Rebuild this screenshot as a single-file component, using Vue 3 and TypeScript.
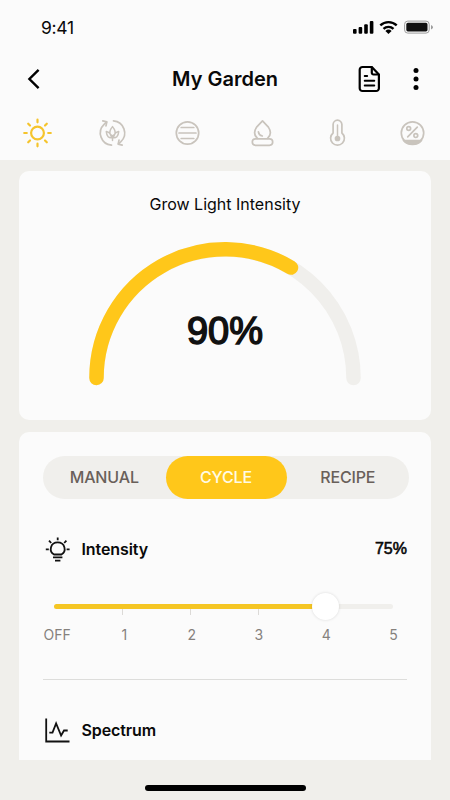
<script setup lang="ts">
import { ref, computed } from 'vue'

const modes = ['MANUAL', 'CYCLE', 'RECIPE']
const mode = ref('CYCLE')
const steps = ['OFF', '1', '2', '3', '4', '5']
const ticks = [67.5, 135.5, 203.5]
const level = ref(4)
const fill = computed(() => `${(level.value / 5) * 100}%`)
</script>

<template>
  <div class="screen">
    <header class="top">
      <div class="status">
        <span class="time">9:41</span>
        <svg class="status-icons" width="82" height="16" viewBox="0 0 82 16">
          <rect x="0" y="9" width="3.6" height="4.8" rx="1" />
          <rect x="5.6" y="7" width="3.6" height="6.8" rx="1" />
          <rect x="11.2" y="4.2" width="3.6" height="9.6" rx="1" />
          <rect x="16.8" y="1" width="3.6" height="12.8" rx="1" />
          <g fill="none" stroke="#000" stroke-width="2.4">
            <path d="M27.3 5.4a12 12 0 0 1 16.4 0" />
            <path d="M30.5 8.9a7.3 7.3 0 0 1 10 0" />
          </g>
          <path d="M32.4 10.9a4.6 4.6 0 0 1 6.2 0L35.5 14z" />
          <rect x="51.6" y="1.1" width="24.6" height="12" rx="3.2" fill="none" stroke="#9d9d9d" />
          <rect x="53.3" y="2.8" width="21.2" height="8.6" rx="1.6" fill="#111" />
          <path d="M78 5v4.4q2-.7 2-2.2T78 5z" fill="#9d9d9d" />
        </svg>
      </div>
      <div class="nav">
        <svg width="14" height="22" viewBox="0 0 14 22">
          <path d="M11.6 1.8 2.4 11l9.2 9.2" fill="none" stroke="#000" stroke-width="2.4" />
        </svg>
        <h1>My Garden</h1>
        <svg width="24" height="28" viewBox="0 0 24 28">
          <g fill="none" stroke="#000" stroke-width="2.2" stroke-linejoin="round" stroke-linecap="round">
            <path d="M4.5 2h9.3l7.1 7.4v13.8a2.8 2.8 0 0 1-2.8 2.8H4.5a2.8 2.8 0 0 1-2.8-2.8V4.8A2.8 2.8 0 0 1 4.5 2z" />
            <path d="M13.8 2.4v5.4a1.7 1.7 0 0 0 1.7 1.7h5" />
            <path d="M6.7 11h2.5M6.7 15.7h9.6M6.7 20.5h9.6" stroke-width="1.9" />
          </g>
        </svg>
        <svg class="more" width="6" height="24" viewBox="0 0 6 24">
          <circle cx="3" cy="3.4" r="2.5" /><circle cx="3" cy="12" r="2.5" /><circle cx="3" cy="20.6" r="2.5" />
        </svg>
      </div>
      <nav class="tabs">
        <svg class="sun" viewBox="0 0 30 30">
          <circle cx="15" cy="15" r="6.4" />
          <path d="M15 1.7v2.6M15 25.7v2.6M1.7 15h2.6M25.7 15h2.6M5.7 5.7l1.8 1.8M22.5 22.5l1.8 1.8M5.7 24.3l1.8-1.8M22.5 7.5l1.8-1.8" />
        </svg>
        <svg viewBox="0 0 30 30">
          <path d="M14 27.1A12.1 12.1 0 0 1 6.6 6.3L9 4.2M16 2.9a12.1 12.1 0 0 1 7.4 20.8L21 25.8" />
          <path d="M5.3 2.9l4 .9-.8 4M24.7 27.1l-4-.9.8-4" />
          <path d="M15 8.6q3.6 4.4 2.3 7.7-.7 2-2.3 3.3-1.6-1.3-2.3-3.3-1.3-3.3 2.3-7.7zM8.8 13.6q4 .6 6.2 6-5.6 1.3-6.2-6zM21.2 13.6q-4 .6-6.2 6 5.6 1.3 6.2-6zM15 17.5v5" stroke-width="1.5" />
        </svg>
        <svg viewBox="0 0 30 30">
          <circle cx="15" cy="15" r="11.2" />
          <path d="M8.7 9.5h12.6M6.5 15h17M8.7 20.5h12.6" />
        </svg>
        <svg viewBox="0 0 30 30">
          <path d="M10 20.3c-4-3.4-3.2-7.7-.9-11.2L15 2.8l5.9 6.3c2.3 3.5 3.1 7.8-.9 11.2" />
          <path d="M10.9 13.9q.4 3.4 3.9 4.1" />
          <rect x="4.8" y="20.8" width="20.4" height="6.5" rx="3.25" />
        </svg>
        <svg viewBox="0 0 30 30">
          <path d="M10.6 15V6.6a4.4 4.4 0 0 1 8.8 0V15a6.9 6.9 0 1 1-8.8 0z" />
          <path d="M15 7v13" stroke-width="1.5" />
          <circle class="solid" cx="15" cy="20.5" r="2" />
        </svg>
        <svg viewBox="0 0 30 30">
          <circle cx="15" cy="15" r="11.2" />
          <path class="solid" d="M6 22.5h18q-3.4 4-9 4T6 22.5z" />
          <circle cx="11.2" cy="10.5" r="1.9" />
          <circle cx="18.3" cy="17.6" r="1.9" />
          <path d="M19.8 9.2l-9.6 9.7" />
        </svg>
      </nav>
    </header>

    <main>
      <section class="card gauge-card">
        <h2>Grow Light Intensity</h2>
        <div class="gauge">
          <svg width="274" height="146" viewBox="0 0 274 146">
            <path d="M8.5 137A128.5 128.5 0 0 1 265.5 137" stroke="#f0efec" />
            <path d="M8.5 137A128.5 128.5 0 0 1 203 26.6" stroke="#ffc71a" />
          </svg>
          <span class="reading">90%</span>
        </div>
      </section>

      <section class="card controls">
        <div class="segmented">
          <button v-for="m in modes" :key="m" :class="{ active: m === mode }" @click="mode = m">{{ m }}</button>
        </div>
        <div class="row intensity">
          <svg width="26" height="26" viewBox="0 0 26 26">
            <path d="M9 17.5C3.4 14.2 5.4 5.3 12.7 5.3s9.3 8.9 3.7 12.2zM8 20.4h9.4M10 23.7h5.4M12.7.5v2.7M.8 12.3h3M21.6 12.3h3M4 3.7l2.2 2.3M21.4 3.7l-2.2 2.3" />
          </svg>
          <h3>Intensity</h3>
          <strong>75%</strong>
        </div>
        <div class="slider">
          <i v-for="t in ticks" :key="t" class="tick" :style="{ left: t + 'px' }"></i>
          <div class="fill" :style="{ width: fill }"></div>
          <div class="knob" :style="{ left: fill }"></div>
        </div>
        <div class="scale">
          <span v-for="s in steps" :key="s" @click="level = steps.indexOf(s)">{{ s }}</span>
        </div>
        <div class="row spectrum">
          <svg width="26" height="26" viewBox="0 0 26 26">
            <path d="M1.2.5v23H24.5" />
            <path d="M4.3 14.6h3.2L11.1 5.5l5 12 2.9-5h3.7" />
          </svg>
          <h3>Spectrum</h3>
        </div>
      </section>
    </main>
    <div class="home"></div>
  </div>
</template>

<style>
body {
  margin: 0;
  background: #f0efeb;
}
</style>

<style scoped>
.screen {
  width: 450px;
  height: 800px;
  overflow: hidden;
  display: flex;
  flex-direction: column;
  background: #f0efeb;
  color: #090909;
  font-family: Inter, "Liberation Sans", sans-serif;
}
h1, h2, h3 { margin: 0; }
svg { display: block; flex: none; }
.top {
  height: 160px;
  flex: none;
  background: #fbfbfb;
}
.status {
  height: 54px;
  display: flex;
  align-items: center;
  justify-content: space-between;
  padding: 0 15px 0 41px;
}
.status-icons { margin-top: 2px; }
.time {
  font-size: 17.5px;
  letter-spacing: -0.3px;
}
.nav {
  height: 50px;
  display: grid;
  grid-template-columns: 14px 317px 24px 1fr;
  align-items: center;
  padding: 0 31px 0 27px;
}
.nav h1 {
  text-align: center;
  font-size: 20px;
  font-weight: 600;
  line-height: 24px;
  padding-left: 51px;
}
.more { justify-self: end; }
.tabs {
  height: 56px;
  display: flex;
  justify-content: space-between;
  align-items: center;
  padding: 2px 23px 0 22px;
  box-sizing: border-box;
}
.tabs svg {
  width: 30px;
  height: 30px;
  fill: none;
  stroke: #c9c4bd;
  stroke-width: 1.7;
  stroke-linecap: round;
  stroke-linejoin: round;
  transform: translateX(0.5px);
}
.tabs .sun {
  stroke: #f5c42c;
  stroke-width: 2.2;
}
.tabs .solid { fill: #c9c4bd; }
main {
  height: 600px;
  flex: none;
  box-sizing: border-box;
  padding: 11px 19px 0;
  display: flex;
  flex-direction: column;
  gap: 12px;
}
.card {
  background: #fbfbfb;
  border-radius: 10px;
}
.gauge-card {
  height: 249px;
  display: flex;
  flex-direction: column;
  align-items: center;
}
.gauge-card h2 {
  font-size: 16px;
  font-weight: 400;
  line-height: 20px;
  margin-top: 23px;
}
.gauge {
  display: grid;
  margin-top: 26.5px;
  place-items: center;
}
.gauge svg, .reading { grid-area: 1 / 1; }
.gauge path {
  fill: none;
  stroke-width: 14.5;
  stroke-linecap: round;
}
.reading {
  font-family: "Liberation Sans", Arial, sans-serif;
  font-size: 38px;
  line-height: 40px;
  -webkit-text-stroke: 1.5px #111;
  color: #111;
  padding-top: 34px;
}
.controls {
  height: 328px;
  box-sizing: border-box;
  padding: 24px 24px 0;
  border-radius: 10px 10px 0 0;
  overflow: hidden;
}
.segmented {
  width: 366px;
  height: 43px;
  display: grid;
  grid-template-columns: 122.5px 121px 122.5px;
  border-radius: 22px;
  background: #f0efec;
}
.segmented button {
  border: 0;
  padding: 0 0 2px;
  height: 43px;
  background: none;
  border-radius: 22px;
  font: 500 16px/40px Inter, sans-serif;
  letter-spacing: -0.15px;
  color: #69605a;
}
.segmented .active {
  background: #ffc71a;
  color: #fffbe5;
}
.row {
  display: flex;
  align-items: center;
}
.row svg {
  fill: none;
  stroke: #111;
  stroke-width: 1.8;
}
.row h3 {
  font-size: 16px;
  font-weight: 600;
  letter-spacing: -0.1px;
  line-height: 20px;
  margin: -2px 0 0 11px;
}
.row strong {
  font-family: "Liberation Sans", Arial, sans-serif;
  font-size: 16px;
  font-weight: 400;
  -webkit-text-stroke: 0.6px #090909;
  line-height: 20px;
  margin: -2px 0 0 auto;
}
.intensity {
  height: 26px;
  margin-top: 37.5px;
  padding-left: 1.5px;
}
.slider {
  position: relative;
  width: 339px;
  height: 5px;
  margin: 41.5px 0 0 11px;
  border-radius: 3px;
  background: #f0efec;
}
.fill {
  height: 5px;
  border-radius: 3px;
  background: #f5c624;
}
.tick {
  position: absolute;
  top: 5px;
  width: 1.5px;
  height: 5.5px;
  background: #dcdad7;
}
.knob {
  position: absolute;
  top: -11px;
  width: 27px;
  height: 27px;
  margin-left: -13.5px;
  border-radius: 50%;
  background: #fff;
  box-shadow: 0 0 3px rgba(0, 0, 0, 0.14);
}
.scale {
  display: grid;
  grid-template-columns: repeat(6, 67.3px);
  margin: 17px -20px 0 -19.6px;
  height: 53px;
  text-align: center;
  font-size: 14px;
  line-height: 18px;
  color: #85817d;
}
.spectrum {
  border-top: 1px solid #dddddb;
  padding: 37.5px 0 0 1.5px;
}
.home {
  width: 161px;
  height: 6px;
  border-radius: 3px;
  margin: 24.5px auto 0;
  background: #000;
}
</style>
